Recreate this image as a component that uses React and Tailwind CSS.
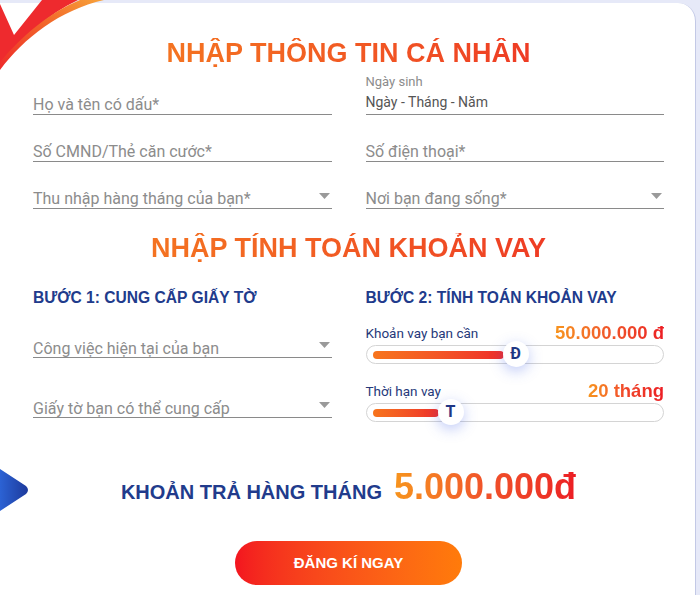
import React from 'react';

const Caret = ({className = ''}) => (
    <svg width="11" height="6" viewBox="0 0 11 6" className={className}>
        <path d="M0 0 L11 0 L5.5 6 Z" fill="#9a9a9a"/>
    </svg>
);

const Logo = () => (
    <svg width="104" height="72" viewBox="0 0 104 72" className="absolute -top-[3px] left-0">
        <defs>
            <linearGradient id="swoosh" x1="0" y1="1" x2="1" y2="0">
                <stop offset="0" stopColor="#ee2a2a"/>
                <stop offset="0.6" stopColor="#f26b2a"/>
                <stop offset="1" stopColor="#f7a23a"/>
            </linearGradient>
        </defs>
        <path d="M0 4 L14 35 L42 0 L78 0 C48 14 22 38 0 66 Z" fill="#ee2a2e"/>
        <path d="M0 70 C24 38 60 10 104 0 L80 0 C50 12 22 36 0 62 Z" fill="url(#swoosh)"/>
    </svg>
);

const Arrow = () => (
    <svg width="30" height="46" viewBox="0 0 30 46" className="absolute left-0 top-[464px]">
        <defs>
            <linearGradient id="arrowBlue" x1="0" y1="0" x2="1" y2="0">
                <stop offset="0" stopColor="#2f6be0"/>
                <stop offset="1" stopColor="#1d3a9c"/>
            </linearGradient>
        </defs>
        <path d="M-6 4 Q-6 -2 0 2 L26 19 Q30 23 26 27 L0 44 Q-6 48 -6 42 Z" fill="url(#arrowBlue)"/>
    </svg>
);

const Field = ({children, select}) => (
    <div className="h-[47px] flex items-end justify-between border-b border-[#8a8a8a] pb-[1px]">
        <span className="text-[16px] leading-[17px] text-[#8c8c8c]">{children}</span>
        {select && <Caret className="mb-[8px] mr-[2px]"/>}
    </div>
);

const Slider = ({fill, thumb, letter}) => (
    <div className="relative mt-[2px] h-[19px] rounded-full border border-[#d4d4d4] bg-white">
        <div
            className="absolute left-[6px] top-[5px] h-[8px] rounded-full bg-linear-to-r from-[#f7741c] to-[#ee2a2a]"
            style={{width: fill}}
        />
        <div
            className="absolute -top-[5px] w-[26px] h-[26px] rounded-full bg-white flex items-center justify-center text-[16px] font-bold text-[#1f3784] shadow-[0_4px_14px_rgba(70,100,230,0.35)]"
            style={{left: thumb}}
        >
            {letter}
        </div>
    </div>
);

const arial = {fontFamily: '"Liberation Sans", Arial, sans-serif'};

export default function App() {
    return (
        <div className="w-[700px] h-[595px] bg-[#e6e9f8] pt-[3px] pr-[4px] overflow-hidden" style={{fontFamily: 'Roboto, "Liberation Sans", sans-serif'}}>
            <div className="relative h-full bg-white rounded-tr-[18px] border-r border-[#c3c9e6] pt-[35px] pl-[33px] pr-[31px]">
                <Logo/>
                <Arrow/>

                {/* Thông tin cá nhân */}
                <h1 className="text-center h-[30px] text-[27px] leading-[30px] font-bold" style={arial}>
                    <span className="bg-linear-to-r from-[#f47321] to-[#ee3b24] bg-clip-text text-transparent">NHẬP THÔNG TIN CÁ NHÂN</span>
                </h1>

                <div className="grid grid-cols-2 gap-x-[34px]">
                    <Field>Họ và tên có dấu*</Field>
                    <div className="h-[47px] flex flex-col justify-end border-b border-[#8a8a8a] pb-[3px]">
                        <span className="text-[13px] leading-[16px] text-[#8c8c8c] mb-[3px]">Ngày sinh</span>
                        <span className="text-[14px] leading-[18px] text-[#555]">Ngày - Tháng - Năm</span>
                    </div>
                    <Field>Số CMND/Thẻ căn cước*</Field>
                    <Field>Số điện thoại*</Field>
                    <Field select>Thu nhập hàng tháng của bạn*</Field>
                    <Field select>Nơi bạn đang sống*</Field>
                </div>

                {/* Tính toán khoản vay */}
                <h2 className="mt-[24px] text-center h-[30px] text-[27px] leading-[30px] font-bold" style={arial}>
                    <span className="bg-linear-to-r from-[#f47321] to-[#ee3b24] bg-clip-text text-transparent">NHẬP TÍNH TOÁN KHOẢN VAY</span>
                </h2>

                <div className="mt-[25px] grid grid-cols-2 gap-x-[34px]">
                    <div>
                        <h3 className="text-[15.6px] leading-[20px] font-bold text-[#213b8c]" style={arial}>BƯỚC 1: CUNG CẤP GIẤY TỜ</h3>
                        <div className="h-[50px] flex items-end justify-between border-b border-[#8a8a8a] pb-0">
                            <span className="text-[16px] leading-[17px] text-[#8c8c8c]">Công việc hiện tại của bạn</span>
                            <Caret className="mb-[9px] mr-[2px]"/>
                        </div>
                        <div className="h-[60px] flex items-end justify-between border-b border-[#8a8a8a] pb-0">
                            <span className="text-[16px] leading-[17px] text-[#8c8c8c]">Giấy tờ bạn có thể cung cấp</span>
                            <Caret className="mb-[9px] mr-[2px]"/>
                        </div>
                    </div>
                    <div>
                        <h3 className="text-[15.6px] leading-[20px] font-bold text-[#213b8c]" style={arial}>BƯỚC 2: TÍNH TOÁN KHOẢN VAY</h3>
                        <div className="mt-[15px] flex items-center justify-between h-[20px]">
                            <span className="text-[13.5px] text-[#26397a]">Khoản vay bạn cần</span>
                            <span className="text-[18.5px] font-bold bg-linear-to-r from-[#f7941d] via-[#f0552a] to-[#ec1c24] bg-clip-text text-transparent" style={arial}>50.000.000 đ</span>
                        </div>
                        <Slider fill={131} thumb={136} letter="Đ"/>
                        <div className="mt-[17px] flex items-center justify-between h-[20px]">
                            <span className="text-[13.5px] text-[#26397a]">Thời hạn vay</span>
                            <span className="text-[18.5px] font-bold bg-linear-to-r from-[#f7941d] via-[#f0452a] to-[#ec1c24] bg-clip-text text-transparent" style={arial}>20 tháng</span>
                        </div>
                        <Slider fill={66} thumb={71} letter="T"/>
                    </div>
                </div>

                {/* Khoản trả hàng tháng */}
                <div className="mt-[45px] flex items-baseline justify-center gap-[12px]" style={arial}>
                    <span className="text-[20px] font-bold text-[#213b8c]">KHOẢN TRẢ HÀNG THÁNG</span>
                    <span className="text-[36px] leading-[40px] font-bold bg-linear-to-r from-[#f7941d] via-[#f0522a] to-[#ec1c24] bg-clip-text text-transparent">5.000.000đ</span>
                </div>

                <div className="mt-[34px] flex justify-center">
                    <button className="w-[227px] h-[44px] rounded-full bg-linear-to-r from-[#f3141f] to-[#ff7b0a] text-white text-[15px] font-bold" style={arial}>
                        ĐĂNG KÍ NGAY
                    </button>
                </div>
            </div>
        </div>
    );
}
